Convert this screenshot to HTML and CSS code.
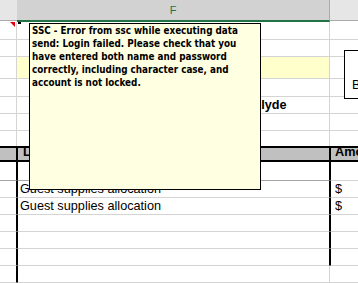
FILE: index.html
```html
<!DOCTYPE html>
<html>
<head>
<meta charset="utf-8">
<link rel="stylesheet" href="styles.css">
</head>
<body>
<div class="sheet">
  <div class="hdr">
    <div class="hc"></div>
    <div class="hc sel">F</div>
    <div class="hc"></div>
  </div>
  <div class="row ra"><div class="c ce"><span class="flag"></span></div><div class="c cf"></div><div class="c cg"></div></div>
  <div class="row rb"><div class="c ce"></div><div class="c cf"></div><div class="c cg"></div></div>
  <div class="row rc"><div class="c ce"></div><div class="c cf hl"></div><div class="c cg"></div></div>
  <div class="row rd"><div class="c ce"></div><div class="c cf"></div><div class="c cg"></div></div>
  <div class="row re"><div class="c ce"></div><div class="c cf name"><b>Clyde</b></div><div class="c cg"></div></div>
  <div class="row re"><div class="c ce"></div><div class="c cf"></div><div class="c cg"></div></div>
  <div class="row rg"><div class="c ce"></div><div class="c cf"></div><div class="c cg"></div></div>
  <div class="row th"><div class="c ce"></div><div class="c cf tl"><b>Line Item</b></div><div class="c cg tr"><b>Amount</b></div></div>
  <div class="row ri tb"><div class="c ce"></div><div class="c cf tl"></div><div class="c cg tr"></div></div>
  <div class="row re tb"><div class="c ce"></div><div class="c cf tl">Guest supplies allocation</div><div class="c cg tr">$</div></div>
  <div class="row re tb"><div class="c ce"></div><div class="c cf tl">Guest supplies allocation</div><div class="c cg tr">$</div></div>
  <div class="row re tb"><div class="c ce"></div><div class="c cf tl"></div><div class="c cg tr"></div></div>
  <div class="row re tb"><div class="c ce"></div><div class="c cf tl"></div><div class="c cg tr"></div></div>
  <div class="row re tb"><div class="c ce"></div><div class="c cf tl"></div><div class="c cg tr"></div></div>
  <div class="row re tb"><div class="c ce"></div><div class="c cf tle"></div><div class="c cg"></div></div>

  <span class="arrow"></span>
  <div class="shape"><span>B</span></div>
  <div class="comment">
    <div class="ln">SSC - Error from ssc while executing data</div>
    <div class="ln">send: Login failed. Please check that you</div>
    <div class="ln">have entered both name and password</div>
    <div class="ln">correctly, including character case, and</div>
    <div class="ln">account is not locked.</div>
  </div>
</div>
</body>
</html>
```
FILE: styles.css
```css
html, body {
  margin: 0;
  padding: 0;
  background: #ffffff;
}
.sheet {
  position: relative;
  width: 358px;
  height: 283px;
  overflow: hidden;
  font-family: "Liberation Sans", Arial, sans-serif;
  font-size: 12.7px;
  color: #000;
}
.hdr {
  display: grid;
  grid-template-columns: 17px 313px 1fr;
  height: 22px;
  align-items: start;
}
.hc {
  box-sizing: border-box;
  height: 21px;
  background: #e6e6e6;
  border-bottom: 1px solid #ababab;
}
.hc.sel {
  height: 22px;
  background: #d2d2d2;
  border-bottom: 2px solid #217346;
  border-right: 1px solid #ababab;
  color: #217346;
  font-size: 11px;
  text-align: center;
  line-height: 20px;
}
.row {
  display: grid;
  grid-template-columns: 17px 313px 1fr;
}
.ra { height: 18px; }
.rb { height: 17px; }
.rc { height: 22px; }
.rd { height: 18px; }
.re { height: 17px; }
.rg { height: 15px; }
.th { height: 16px; }
.ri { height: 19px; }
.c {
  box-sizing: border-box;
  border-bottom: 1px solid #d4d4d4;
  display: flex;
  align-items: flex-end;
  line-height: 15px;
  white-space: nowrap;
  overflow: hidden;
}
.ce, .cf {
  border-right: 1px solid #d4d4d4;
}
.ce { position: relative; overflow: visible; }
.rg .c { border-bottom: none; }
.hl { background: #ffffcc; }
.name { padding-left: 235px; }
.flag {
  position: absolute;
  right: 1px;
  top: 0;
  width: 0;
  height: 0;
  border-top: 5px solid #e3000f;
  border-left: 5px solid transparent;
}
.th .c {
  background: #c0c0c0;
  border-top: 2px solid #000;
  border-bottom: 2px solid #000;
}
.tb .ce, .th .ce { border-right-color: #000; }
.tl {
  border-left: 1px solid #000;
  border-right-color: #000 !important;
  padding-left: 2px;
}
.th .tl { padding-left: 5px; }
.tle { border-left: 1px solid #000; }
.tr {
  border-left: 1px solid #000;
  padding-left: 4px;
}
.ri .ce, .ri .cf { border-bottom-color: #a6a6a6; }
.arrow {
  position: absolute;
  left: 18px;
  top: 22px;
  width: 3px;
  height: 2px;
  background: #000;
}
.shape {
  position: absolute;
  left: 344px;
  top: 50px;
  width: 40px;
  height: 49px;
  box-sizing: border-box;
  border: 1px solid #000;
  background: #fff;
  display: flex;
  align-items: flex-end;
  padding: 0 0 5px 7px;
  line-height: 15px;
}
.comment {
  position: absolute;
  left: 29px;
  top: 23px;
  width: 232px;
  height: 167px;
  box-sizing: border-box;
  border: 1px solid #000;
  background: #ffffe1;
  padding: 0 2px;
  font-family: "DejaVu Sans Condensed", "DejaVu Sans", sans-serif;
  font-stretch: condensed;
  font-weight: bold;
  font-size: 9.8px;
  line-height: 13px;
  color: #000;
}
.ln { white-space: nowrap; }
```
